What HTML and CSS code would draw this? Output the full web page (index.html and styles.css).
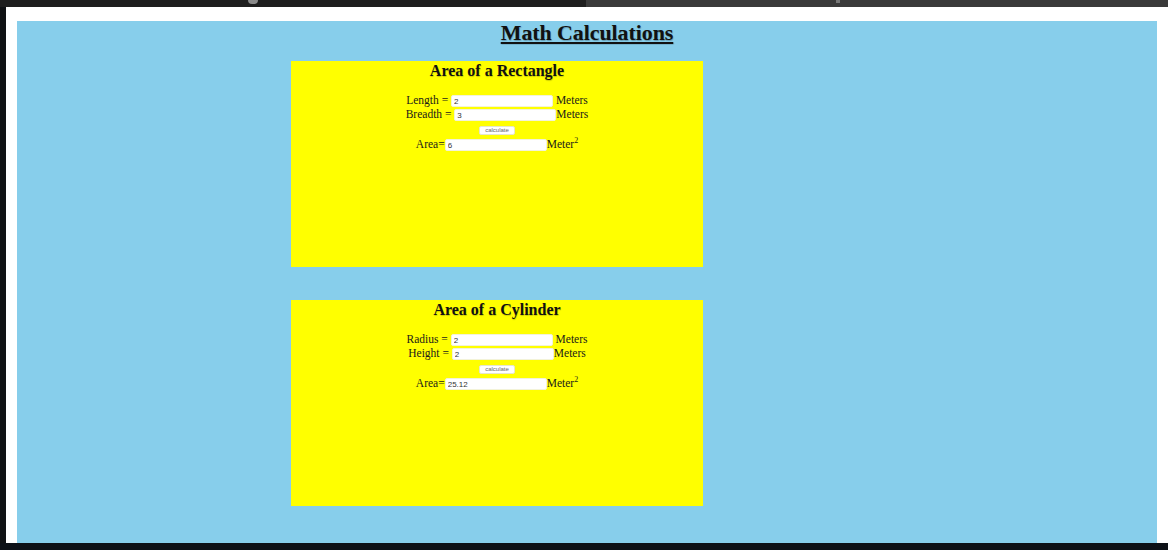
FILE: index.html
```html
<!DOCTYPE html>
<html lang="en">
<head>
<meta charset="utf-8">
<title>Math Calculations</title>
<link rel="stylesheet" href="styles.css">
</head>
<body>
<div class="screen">
  <div class="topbar">
    <div class="tab-active"><span class="tab-dot"></span></div>
    <div class="tab-rest"><span class="tab-mark"></span></div>
  </div>
  <div class="main">
    <div class="edge"></div>
    <div class="page">
      <div class="canvas">
        <h1 class="page-title">Math Calculations</h1>
        <section class="card">
          <h2 class="card-title">Area of a Rectangle</h2>
          <div class="form">
            <div class="row">Length = <input class="field" type="text" value="2"> Meters</div>
            <div class="row">Breadth = <input class="field" type="text" value="3">Meters</div>
            <div class="row row-btn"><button class="btn" type="button">calculate</button></div>
            <div class="row">Area=<input class="field" type="text" value="6">Meter<sup>2</sup></div>
          </div>
        </section>
        <section class="card">
          <h2 class="card-title">Area of a Cylinder</h2>
          <div class="form">
            <div class="row">Radius = <input class="field" type="text" value="2"> Meters</div>
            <div class="row">Height = <input class="field" type="text" value="2">Meters</div>
            <div class="row row-btn"><button class="btn" type="button">calculate</button></div>
            <div class="row">Area=<input class="field" type="text" value="25.12">Meter<sup>2</sup></div>
          </div>
        </section>
      </div>
    </div>
  </div>
  <div class="bottombar"></div>
</div>
</body>
</html>
```
FILE: styles.css
```css
* { box-sizing: border-box; }
html, body { margin: 0; padding: 0; }
body { background: #0e1116; }

.screen {
  width: 1168px;
  height: 550px;
  display: flex;
  flex-direction: column;
  overflow: hidden;
}

.topbar { height: 7px; display: flex; }
.tab-active { width: 586px; background: #1e1e1e; position: relative; }
.tab-rest { flex: 1; background: #3a3a3a; position: relative; }
.tab-dot {
  position: absolute; left: 248px; top: 0;
  width: 10px; height: 4px; border-radius: 0 0 5px 5px; background: #8a8a8a;
}
.tab-mark {
  position: absolute; left: 250px; top: 0;
  width: 4px; height: 3px; background: #777;
}

.main { flex: 1; display: flex; min-height: 0; }
.edge { width: 6px; background: #0f1114; }
.page {
  flex: 1;
  background: #ffffff;
  padding: 14px 11px 0 11px;
  overflow: hidden;
}
.canvas {
  background: #87ceeb;
  height: 700px;
}

.page-title {
  margin: 0;
  font-family: "Liberation Serif", "Times New Roman", serif;
  font-size: 22px;
  line-height: 24px;
  font-weight: bold;
  letter-spacing: -0.1px;
  text-align: center;
  text-decoration: underline;
  text-decoration-thickness: 2px;
  text-underline-offset: 2px;
  color: #111;
  text-shadow: 0.5px 0.5px 1px rgba(0,0,0,0.25);
}

.card {
  width: 412px;
  height: 206px;
  margin: 16px 0 0 274px;
  background: #ffff00;
}
.card + .card { margin-top: 33px; }

.card-title {
  margin: 0;
  font-family: "Liberation Serif", "Times New Roman", serif;
  font-size: 16px;
  line-height: 19px;
  font-weight: bold;
  text-align: center;
  color: #111;
  text-shadow: 0.5px 0.5px 1px rgba(0,0,0,0.2);
}

.form {
  margin-top: 13px;
  font-family: "Liberation Serif", "Times New Roman", serif;
  font-size: 11.5px;
  color: #1a1a1a;
  text-align: center;
}
.row {
  height: 14px;
  line-height: 14px;
  white-space: nowrap;
}
.row-btn { height: 16px; line-height: 16px; }

.field {
  width: 102px;
  height: 12px;
  padding: 0 2px;
  margin: 0;
  border: 1px solid #f3f3d8;
  border-radius: 2px;
  background: #ffffff;
  font-family: "Liberation Sans", Arial, sans-serif;
  font-size: 8px;
  color: #333;
  vertical-align: middle;
  outline: none;
}

.btn {
  height: 9px;
  width: 36px;
  padding: 0;
  margin: 0;
  border: 1px solid #e6e6cc;
  border-radius: 2px;
  background: #ffffff;
  font-family: "Liberation Sans", Arial, sans-serif;
  font-size: 6px;
  line-height: 7px;
  color: #666;
  vertical-align: middle;
}

sup {
  font-size: 8px;
  line-height: 0;
  vertical-align: 5px;
}

.bottombar { height: 7px; background: #0d1117; }
```
